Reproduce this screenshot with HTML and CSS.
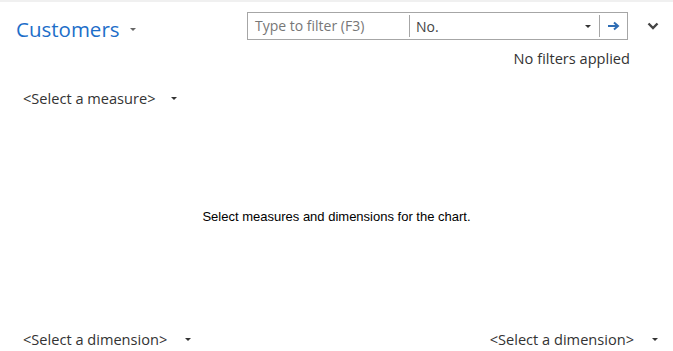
FILE: index.html
```html
<!DOCTYPE html>
<html lang="en">
<head>
  <meta charset="UTF-8" />
  <title>Customers</title>
  <link rel="stylesheet" href="styles.css">
</head>
<body>
  <div class="topline"></div>
  <div class="header">
    <div class="title">Customers <span class="caret"></span></div>
    <div class="filter">
      <span class="filter-input">Type to filter (F3)</span>
      <span class="filter-field">No.</span>
      <span class="caret dark"></span>
      <span class="filter-go">
        <svg width="12" height="10" viewBox="0 0 12 10"><path d="M0 5h9M6 1.5l4 3.5-4 3.5" fill="none" stroke="#2e6db4" stroke-width="2"/></svg>
      </span>
    </div>
    <div class="collapse">
      <svg width="12" height="8" viewBox="0 0 12 8"><path d="M1.5 1.5l4.5 4.5 4.5-4.5" fill="none" stroke="#444" stroke-width="2.4"/></svg>
    </div>
  </div>
  <div class="filters-state">No filters applied</div>

  <div class="chart">
    <div class="picker measure">&lt;Select a measure&gt; <span class="caret dark"></span></div>
    <div class="chart-msg">Select measures and dimensions for the chart.</div>
    <div class="axis-row">
      <div class="picker">&lt;Select a dimension&gt; <span class="caret dark"></span></div>
      <div class="picker">&lt;Select a dimension&gt; <span class="caret dark"></span></div>
    </div>
  </div>
</body>
</html>
```

FILE: styles.css
```css
body {
  margin: 0;
  background: #fff;
  font-family: "Open Sans", "Noto Sans", sans-serif;
  color: #333;
  width: 673px;
  height: 351px;
  overflow: hidden;
}

.topline {
  height: 2px;
  background: #f0f0f0;
}

.header {
  display: flex;
  align-items: center;
  padding: 10px 0 0 16px;
  height: 28px;
}

.title {
  font-size: 20.5px;
  color: #1d6ec9;
  width: 231px;
  display: flex;
  align-items: center;
  gap: 10px;
  margin-top: 6px;
}

.caret {
  display: inline-block;
  width: 0;
  height: 0;
  border-left: 3px solid transparent;
  border-right: 3px solid transparent;
  border-top: 3px solid #666;
}

.caret.dark {
  border-top-color: #333;
}

.filter {
  width: 379px;
  height: 26px;
  border: 1px solid #a6a6a6;
  display: flex;
  align-items: center;
  font-size: 14px;
}

.filter-input {
  color: #777;
  width: 154px;
  padding-left: 7px;
  border-right: 1px solid #a6a6a6;
  line-height: 22px;
}

.filter-field {
  flex: 1;
  padding-left: 6px;
  color: #444;
}

.filter-go {
  width: 27px;
  margin-left: 8px;
  border-left: 1px solid #a6a6a6;
  height: 22px;
  display: flex;
  align-items: center;
  justify-content: center;
}

.collapse {
  margin-left: 19px;
  display: flex;
  align-items: center;
}

.filters-state {
  text-align: right;
  padding-right: 43px;
  font-size: 14.6px;
  margin-top: 8px;
}

.chart {
  padding: 0 0 0 23px;
}

.picker {
  font-size: 14.6px;
  display: flex;
  align-items: center;
  gap: 18px;
}

.measure {
  margin-top: 20px;
  gap: 15px;
}

.chart-msg {
  font-family: "Liberation Sans", Arial, sans-serif;
  font-size: 13px;
  color: #000;
  text-align: center;
  margin: 101px 0 0 -23px;
}

.axis-row {
  display: flex;
  justify-content: space-between;
  margin-top: 105px;
  padding-right: 15px;
}
```
